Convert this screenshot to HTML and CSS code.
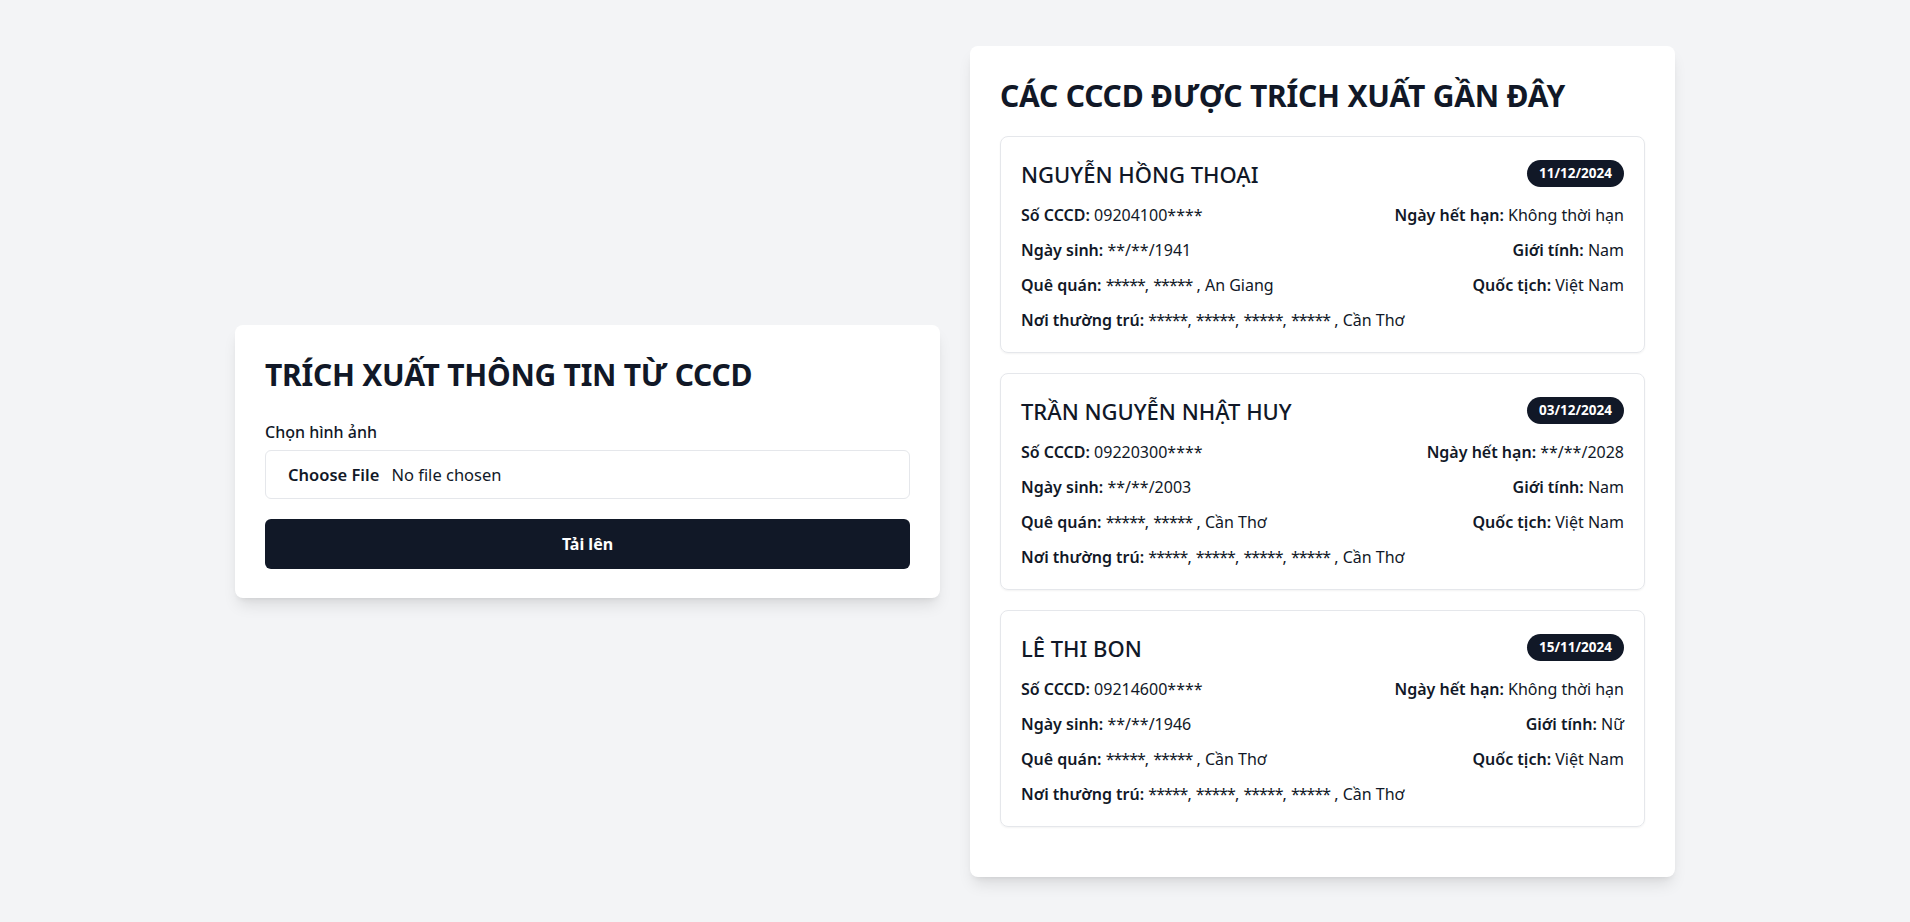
FILE: index.html
```html
<!DOCTYPE html>
<html lang="vi">
<head>
<meta charset="utf-8">
<title>Trích xuất thông tin CCCD</title>
<link rel="stylesheet" href="styles.css">
</head>
<body>
<main class="layout">
  <section class="card upload-card">
    <h1 class="upload-title">TRÍCH XUẤT THÔNG TIN TỪ CCCD</h1>
    <label class="field-label" for="file">Chọn hình ảnh</label>
    <label class="file-box" for="file">
      <span class="file-btn">Choose File</span>
      <span class="file-name">No file chosen</span>
    </label>
    <button class="submit-btn" type="button">Tải lên</button>
  </section>

  <section class="card list-card">
    <h2 class="list-title">CÁC CCCD ĐƯỢC TRÍCH XUẤT GẦN ĐÂY</h2>

    <article class="id-card">
      <div class="id-head">
        <h3 class="id-name">NGUYỄN HỒNG THOẠI</h3>
        <span class="badge">11/12/2024</span>
      </div>
      <div class="id-grid">
        <p><b>Số CCCD:</b> 09204100****</p>
        <p class="right"><b>Ngày hết hạn:</b> Không thời hạn</p>
        <p><b>Ngày sinh:</b> **/**/1941</p>
        <p class="right"><b>Giới tính:</b> Nam</p>
        <p><b>Quê quán:</b> <span class="mask">*****</span>, <span class="mask">*****</span> , An Giang</p>
        <p class="right"><b>Quốc tịch:</b> Việt Nam</p>
        <p class="full"><b>Nơi thường trú:</b> <span class="mask">*****</span>, <span class="mask">*****</span>, <span class="mask">*****</span>, <span class="mask">*****</span> , Cần Thơ</p>
      </div>
    </article>

    <article class="id-card">
      <div class="id-head">
        <h3 class="id-name">TRẦN NGUYỄN NHẬT HUY</h3>
        <span class="badge">03/12/2024</span>
      </div>
      <div class="id-grid">
        <p><b>Số CCCD:</b> 09220300****</p>
        <p class="right"><b>Ngày hết hạn:</b> **/**/2028</p>
        <p><b>Ngày sinh:</b> **/**/2003</p>
        <p class="right"><b>Giới tính:</b> Nam</p>
        <p><b>Quê quán:</b> <span class="mask">*****</span>, <span class="mask">*****</span> , Cần Thơ</p>
        <p class="right"><b>Quốc tịch:</b> Việt Nam</p>
        <p class="full"><b>Nơi thường trú:</b> <span class="mask">*****</span>, <span class="mask">*****</span>, <span class="mask">*****</span>, <span class="mask">*****</span> , Cần Thơ</p>
      </div>
    </article>

    <article class="id-card">
      <div class="id-head">
        <h3 class="id-name">LÊ THI BON</h3>
        <span class="badge">15/11/2024</span>
      </div>
      <div class="id-grid">
        <p><b>Số CCCD:</b> 09214600****</p>
        <p class="right"><b>Ngày hết hạn:</b> Không thời hạn</p>
        <p><b>Ngày sinh:</b> **/**/1946</p>
        <p class="right"><b>Giới tính:</b> Nữ</p>
        <p><b>Quê quán:</b> <span class="mask">*****</span>, <span class="mask">*****</span> , Cần Thơ</p>
        <p class="right"><b>Quốc tịch:</b> Việt Nam</p>
        <p class="full"><b>Nơi thường trú:</b> <span class="mask">*****</span>, <span class="mask">*****</span>, <span class="mask">*****</span>, <span class="mask">*****</span> , Cần Thơ</p>
      </div>
    </article>
  </section>
</main>
</body>
</html>
```
FILE: styles.css
```css
* { box-sizing: border-box; }
html, body { margin: 0; padding: 0; }
body {
  background: #f3f4f6;
  font-family: "Noto Sans", "Open Sans", sans-serif;
  color: #111827;
  min-height: 100vh;
  display: flex;
  align-items: center;
  justify-content: center;
}
.layout {
  width: 1440px;
  display: grid;
  grid-template-columns: 1fr 1fr;
  column-gap: 30px;
  align-items: center;
}
.card {
  background: #fff;
  border-radius: 8px;
  box-shadow: 0 10px 15px -3px rgba(0,0,0,0.1), 0 4px 6px -4px rgba(0,0,0,0.1);
}
.upload-card { padding: 30px 30px 29px; display: flex; flex-direction: column; }
.upload-title { margin: 0 0 25px; font-size: 30px; line-height: 40px; font-weight: 700; letter-spacing: -0.25px; }
.field-label { font-size: 16px; line-height: 24px; font-weight: 500; margin-bottom: 6px; }
.file-box {
  height: 49px; border: 1px solid #e5e7eb; border-radius: 6px;
  display: flex; align-items: center; padding: 0 22px; font-size: 16.5px;
}
.file-btn { font-weight: 600; margin-right: 12px; }
.submit-btn {
  margin-top: 20px; height: 50px; border: 0; border-radius: 6px;
  background: #111827; color: #fff; font: inherit; font-size: 16px; font-weight: 700;
}
.list-card { padding: 30px; }
.list-title { margin: 0 0 20px; font-size: 30px; line-height: 40px; font-weight: 700; letter-spacing: -0.2px; }
.id-card {
  border: 1px solid #e5e7eb; border-radius: 8px; padding: 20px 20px 20px;
  margin-bottom: 20px; box-shadow: 0 1px 2px rgba(0,0,0,0.05);
}
.id-head { display: flex; justify-content: space-between; align-items: center; height: 34px; margin-bottom: 12px; }
.id-name { margin: 0; font-size: 22px; line-height: 34px; font-weight: 500; }
.badge {
  background: #111827; color: #fff; font-size: 13.5px; font-weight: 700;
  line-height: 19px; padding: 4px 12px; border-radius: 999px;
}
.id-grid { display: grid; grid-template-columns: 1fr 1fr; row-gap: 11px; font-size: 16px; line-height: 24px; }
.id-grid p { margin: 0; }
.id-grid b { font-weight: 600; }
.id-grid .right { text-align: right; }
.id-grid .full { grid-column: 1 / -1; }
.mask { letter-spacing: -1px; }
```
